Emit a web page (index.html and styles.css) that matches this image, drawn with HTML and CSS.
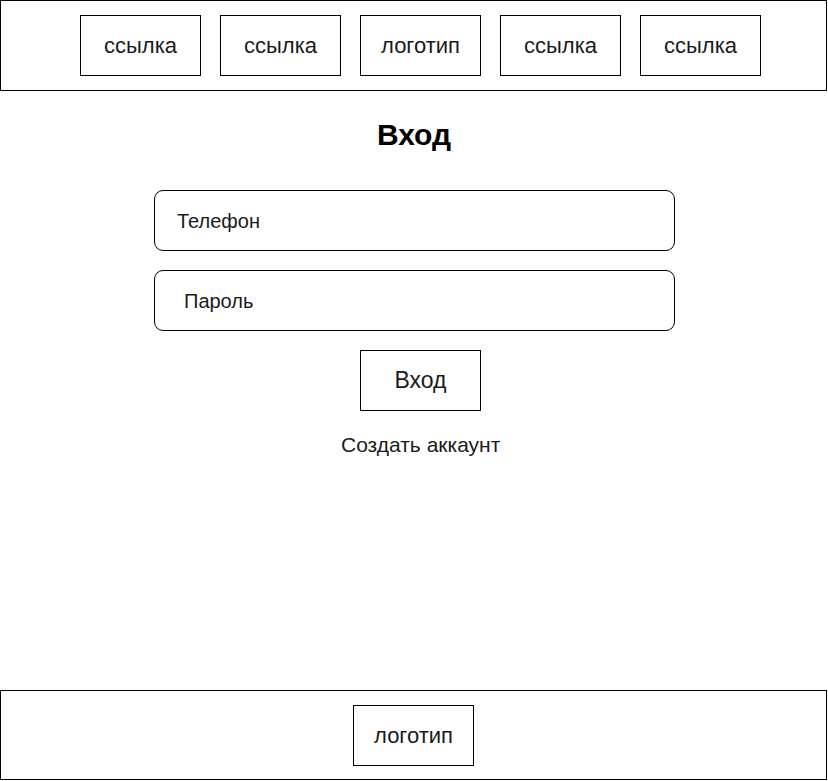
FILE: index.html
```html
<!DOCTYPE html>
<html lang="ru">
<head>
<meta charset="utf-8">
<title>Вход</title>
<link rel="stylesheet" href="styles.css">
</head>
<body>
<div class="page">
  <header class="topbar">
    <a class="navbox">ссылка</a>
    <a class="navbox">ссылка</a>
    <a class="navbox">логотип</a>
    <a class="navbox">ссылка</a>
    <a class="navbox">ссылка</a>
  </header>
  <main class="content">
    <h1 class="title">Вход</h1>
    <div class="field field-phone">Телефон</div>
    <div class="field field-pass">Пароль</div>
    <div class="btn">Вход</div>
    <div class="create">Создать аккаунт</div>
  </main>
  <footer class="bottombar">
    <div class="navbox">логотип</div>
  </footer>
</div>
</body>
</html>
```

FILE: styles.css
```css
* { box-sizing: border-box; }
html, body { margin: 0; padding: 0; background: #fff; }
body {
  font-family: "Liberation Sans", Arial, sans-serif;
  color: #1a1a1a;
}
.page {
  width: 828px;
  height: 781px;
  display: flex;
  flex-direction: column;
}
.topbar {
  width: 827px;
  height: 91px;
  border: 1px solid #000;
  padding: 14px 0 0 79px;
  display: flex;
  gap: 19px;
}
.navbox {
  width: 121px;
  height: 61px;
  border: 1px solid #000;
  display: flex;
  align-items: center;
  justify-content: center;
  font-size: 22px;
  color: #1a1a1a;
}
.content {
  flex: 1;
  display: flex;
  flex-direction: column;
}
.title {
  margin: 27px 0 0 0;
  font-size: 30px;
  line-height: 34px;
  font-weight: bold;
  text-align: center;
  color: #000;
}
.field {
  margin-left: 154px;
  width: 521px;
  height: 61px;
  border: 1px solid #000;
  border-radius: 9px;
  display: flex;
  align-items: center;
  font-size: 20px;
  padding-top: 1px;
}
.field-phone { margin-top: 38px; padding-left: 22px; }
.field-pass { margin-top: 19px; padding-left: 29px; }
.btn {
  margin: 19px 0 0 360px;
  width: 121px;
  height: 61px;
  border: 1px solid #000;
  display: flex;
  align-items: center;
  justify-content: center;
  font-size: 23px;
}
.create {
  margin: 22px 0 0 341px;
  font-size: 21px;
  line-height: 24px;
}
.bottombar {
  width: 827px;
  height: 90px;
  border: 1px solid #000;
  padding-top: 14px;
  display: flex;
  justify-content: center;
  margin-bottom: 1px;
}
```
